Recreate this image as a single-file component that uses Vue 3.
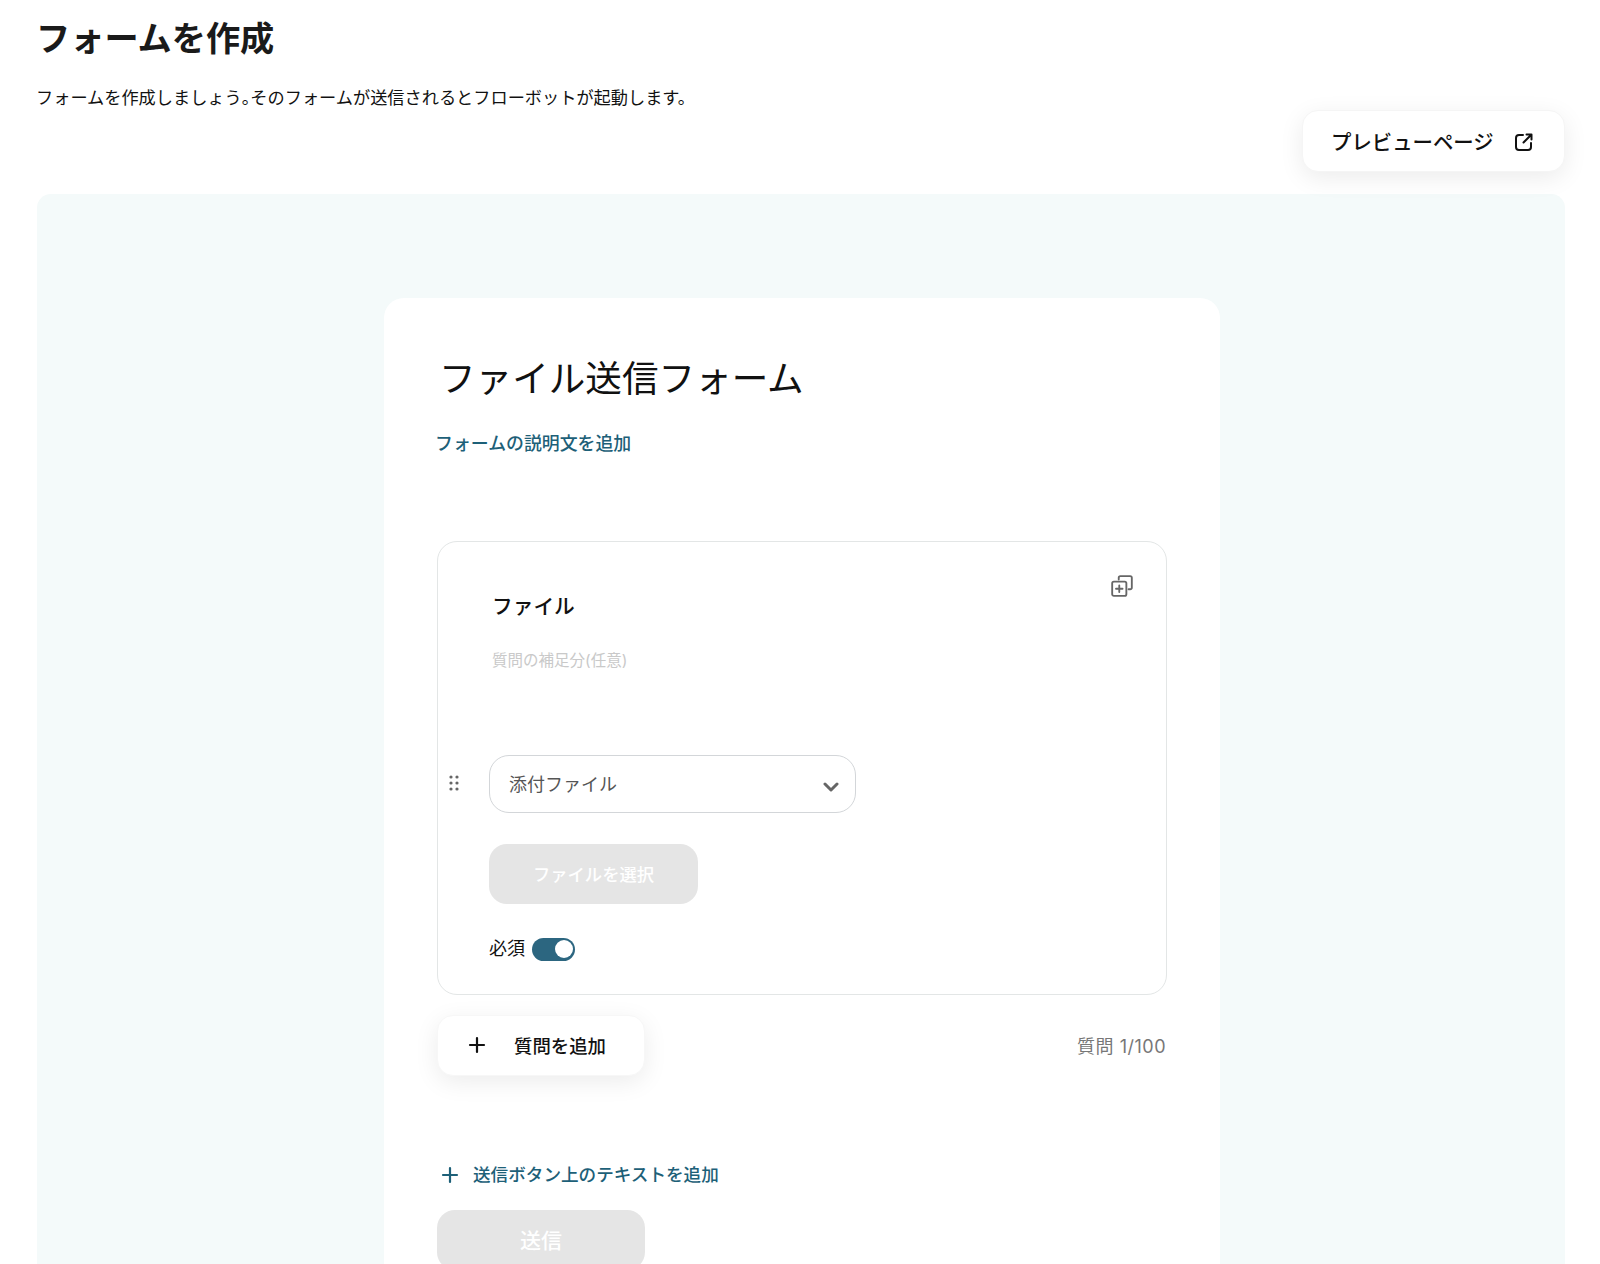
<template>
  <div class="page">
    <header class="head">
      <h1 class="title">フォームを作成</h1>
      <p class="lead">フォームを作成しましょう<span class="half">。</span>そのフォームが送信されるとフローボットが起動します。</p>
    </header>
    <div class="toolbar">
      <button class="preview">
        <span>プレビューページ</span>
        <svg class="ext" width="20" height="20" viewBox="0 0 20 20" fill="none" stroke="#111" stroke-width="2" stroke-linecap="round" stroke-linejoin="round">
          <path d="M9 3H5a3 3 0 0 0-3 3v9a3 3 0 0 0 3 3h9a3 3 0 0 0 3-3v-4" />
          <path d="M9.5 10.5 17 3M12.5 2.5H17.5V7.5" />
        </svg>
      </button>
    </div>
    <section class="panel">
      <div class="card">
        <h2 class="form-name">ファイル送信フォーム</h2>
        <a class="desc-link">フォームの説明文を追加</a>
        <div class="question">
          <svg class="copy" width="24" height="24" viewBox="0 0 22 22" fill="none" stroke="#666" stroke-width="1.7" stroke-linejoin="round" stroke-linecap="round">
            <path d="M8 5V3.5A1.5 1.5 0 0 1 9.500 2h9A1.500 1.500 0 0 1 20 3.500v9a1.500 1.500 0 0 1-1.500 1.500H17" />
            <rect x="2" y="7" width="13" height="13" rx="1.500" />
            <path d="M8.500 10.500v6M5.500 13.500h6" />
          </svg>
          <div class="q-title">ファイル</div>
          <div class="q-note">質問の補足分(任意)</div>
          <div class="select-row">
            <svg class="drag" width="10" height="16" viewBox="0 0 10 16" fill="#666">
              <circle cx="2" cy="2" r="1.600" /><circle cx="8" cy="2" r="1.600" />
              <circle cx="2" cy="8" r="1.600" /><circle cx="8" cy="8" r="1.600" />
              <circle cx="2" cy="14" r="1.600" /><circle cx="8" cy="14" r="1.600" />
            </svg>
            <div class="select">
              <span>添付ファイル</span>
              <svg width="16" height="10" viewBox="0 0 16 10" fill="none" stroke="#666" stroke-width="3" stroke-linecap="round" stroke-linejoin="round">
                <path d="M2 2l6 6 6-6" />
              </svg>
            </div>
          </div>
          <div class="file-btn">ファイルを選択</div>
          <div class="required">
            <span>必須</span>
            <span class="toggle"><span class="knob"></span></span>
          </div>
        </div>
        <div class="add-row">
          <button class="add">
            <svg width="18" height="18" viewBox="0 0 18 18" stroke="#111" stroke-width="2.200" stroke-linecap="round">
              <path d="M9 2v14M2 9h14" />
            </svg>
            <span>質問を追加</span>
          </button>
          <span class="count">質問 1/100</span>
        </div>
        <a class="text-link">
          <svg width="18" height="18" viewBox="0 0 18 18" stroke="#1d6078" stroke-width="2.200" stroke-linecap="round">
            <path d="M9 2v14M2 9h14" />
          </svg>
          <span>送信ボタン上のテキストを追加</span>
        </a>
        <div class="submit">送信</div>
      </div>
    </section>
  </div>
</template>

<script setup>
</script>

<style>
html, body { margin: 0; overflow: hidden; }
</style>

<style scoped>
.page {
  height: 1264px;
  overflow: hidden;
  box-sizing: border-box;
  padding: 0 35px 0 37px;
  background: #fff;
  color: #111;
  font-family: Inter, "Noto Sans CJK JP", "Noto Sans", sans-serif;
}
.head { padding-top: 15px; margin-left: -1px; }
.title { margin: 0; font-size: 34.200px; line-height: 48px; font-weight: 700; color: #1a1a1a; }
.lead { margin: 22px 0 0; font-size: 17.200px; line-height: 26px; }
.half { font-feature-settings: "halt" 1; }
.toolbar { display: flex; justify-content: flex-end; margin-top: -1px; }
.preview {
  width: 263px; height: 62px; box-sizing: border-box;
  display: flex; align-items: center; justify-content: space-between;
  padding: 0 30px 0 28px;
  border: 1px solid #f5f5f5; border-radius: 16px; background: #fff;
  box-shadow: 0 6px 24px rgba(0,0,0,.08);
  font: 500 20.400px Inter, "Noto Sans CJK JP", sans-serif; color: #111;
}
.ext { margin-top: 2px; }
.panel {
  margin-top: 22px; height: 1200px; box-sizing: border-box;
  padding-top: 104px;
  background: #f4fafa; border-radius: 14px;
}
.card {
  width: 836px; height: 1000px; margin-left: 347px;
  box-sizing: border-box; padding: 51px 53px 0;
  background: #fff; border-radius: 20px;
}
.form-name { margin: 0 0 0 2px; font-size: 36.600px; line-height: 60px; font-weight: 400; }
.desc-link { display: block; margin: 22px 0 0 -2px; font-size: 17.900px; line-height: 26px; font-weight: 500; color: #1d6078; }
.question {
  position: relative; width: 730px; height: 454px; box-sizing: border-box;
  margin-top: 84px; padding: 50px 0 0 51px;
  border: 1px solid #e3e6e6; border-radius: 20px;
}
.copy { position: absolute; top: 32px; right: 32px; }
.q-title { margin-left: 3px; font-size: 20.700px; line-height: 30px; font-weight: 500; }
.q-note { margin: 27px 0 0 3px; font-size: 15.500px; line-height: 24px; color: #c9c9c9; }
.select-row { position: relative; margin-top: 82px; }
.drag { position: absolute; left: -40px; top: 20px; }
.select {
  width: 367px; height: 58px; box-sizing: border-box;
  display: flex; align-items: center; justify-content: space-between;
  padding: 0 16px 3px 19px;
  border: 1px solid #d3d6d9; border-radius: 20px;
  font-size: 18px; color: #555;
}
.select svg { margin-top: 8px; }
.file-btn {
  width: 209px; height: 60px; margin-top: 31px; padding-bottom: 2px; box-sizing: border-box;
  display: flex; align-items: center; justify-content: center;
  background: #e5e5e5; border-radius: 18px;
  font-size: 17.300px; font-weight: 500; color: #fff;
}
.required { display: flex; align-items: center; gap: 7px; margin-top: 33px; font-size: 18px; line-height: 24px; }
.toggle {
  display: flex; justify-content: flex-end; align-items: center;
  width: 43px; height: 23px; box-sizing: border-box; padding-right: 2px;
  background: #2c6680; border-radius: 12px;
}
.knob { width: 18px; height: 18px; border-radius: 50%; background: #fff; }
.add-row { display: flex; align-items: center; justify-content: space-between; width: 729px; margin-top: 20px; }
.add {
  width: 208px; height: 61px; box-sizing: border-box;
  display: flex; align-items: center; gap: 28px; padding: 0 0 1px 30px;
  border: 1px solid #f7f7f7; border-radius: 16px; background: #fff;
  box-shadow: 0 6px 24px rgba(0,0,0,.08);
  font: 500 18.400px Inter, "Noto Sans CJK JP", sans-serif; color: #111;
}
.count { font-size: 18px; color: #777; letter-spacing: .5px; padding-bottom: 2px; }
.text-link {
  display: flex; align-items: center; gap: 14px; margin: 86px 0 0 4px;
  font-size: 17.600px; line-height: 26px; font-weight: 500; color: #1d6078;
}
.submit {
  width: 208px; height: 60px; margin-top: 22px; padding-bottom: 2px; box-sizing: border-box;
  display: flex; align-items: center; justify-content: center;
  background: #e5e5e5; border-radius: 18px;
  font-size: 21px; font-weight: 500; color: #fff;
}
</style>
